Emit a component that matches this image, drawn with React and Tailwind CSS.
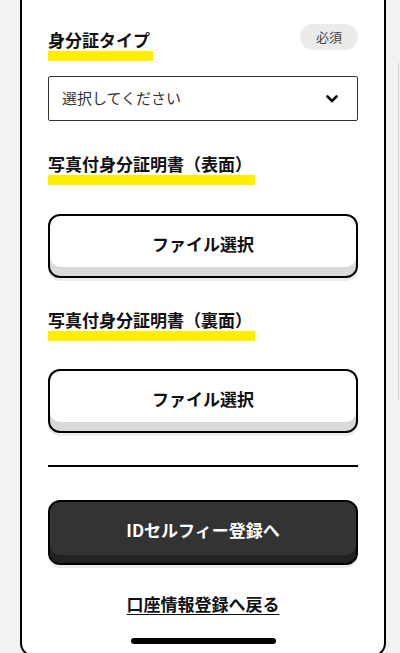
// App.jsx
import React from 'react';

const font = { fontFamily: '"Noto Sans CJK JP", "Noto Sans", sans-serif' };

function Heading({ children }) {
  return (
    <div className="w-fit pr-[3px]">
      <div className="text-[17px] leading-[20px] font-bold text-[#111]">{children}</div>
      <div className="h-[10px] mt-[1px] -mr-[3px] bg-[#ffee00]" />
    </div>
  );
}

function FileButton() {
  return (
    <button className="block w-full h-[64px] rounded-[12px] border-2 border-black bg-white pb-[4px] text-[17px] font-bold text-[#111] shadow-[inset_0_-9px_0_#d9d9d9,0_3px_0_#ececec]">
      ファイル選択
    </button>
  );
}

export default function App() {
  return (
    <div className="h-[653px] overflow-hidden bg-[#f2f2f2] flex pl-[20px]" style={font}>
      <div className="w-[366px] self-start bg-white border-2 border-t-0 border-black rounded-b-[14px] px-[26px] pb-[11px]">
        {/* 身分証タイプ */}
        <div className="flex items-start justify-between pt-[24px]">
          <div className="mt-[6px]">
            <Heading>身分証タイプ</Heading>
          </div>
          <span className="h-[26px] w-[58px] rounded-full bg-[#ebebeb] text-[13px] text-[#444] flex items-center justify-center">
            必須
          </span>
        </div>

        <div className="mt-[15px] h-[45px] border border-[#333] rounded-[2px] flex items-center justify-between pl-[13px] pr-[19px]">
          <span className="text-[15px] text-[#333]">選択してください</span>
          <svg width="12" height="8" viewBox="0 0 12 8" fill="none">
            <path d="M1.5 1.5 L6 6 L10.5 1.5" stroke="#111" strokeWidth="2.6" strokeLinecap="round" strokeLinejoin="round" />
          </svg>
        </div>

        {/* 表面 */}
        <div className="mt-[33px]">
          <Heading>写真付身分証明書（表面）</Heading>
        </div>
        <div className="mt-[29px]">
          <FileButton />
        </div>

        {/* 裏面 */}
        <div className="mt-[32px]">
          <Heading>写真付身分証明書（裏面）</Heading>
        </div>
        <div className="mt-[28px]">
          <FileButton />
        </div>

        <div className="mt-[32px] h-[2px] bg-black" />

        <button className="block mt-[33px] w-full h-[65px] rounded-[12px] border-2 border-black bg-[#333333] pb-[6px] text-[17px] font-bold text-white shadow-[inset_0_-8px_0_#222222,0_3px_0_#ececec]">
          IDセルフィー登録へ
        </button>

        <div className="mt-[29px] text-center leading-[20px]">
          <a href="#" className="text-[17px] leading-[20px] font-bold text-[#111] underline underline-offset-[3px]">
            口座情報登録へ戻る
          </a>
        </div>

        <div className="mt-[24px] flex justify-center">
          <div className="w-[145px] h-[6px] rounded-full bg-black" />
        </div>
      </div>
      <div className="ml-[12px] mt-[63px] w-px h-[337px] bg-[#cfcfcf]" />
    </div>
  );
}
